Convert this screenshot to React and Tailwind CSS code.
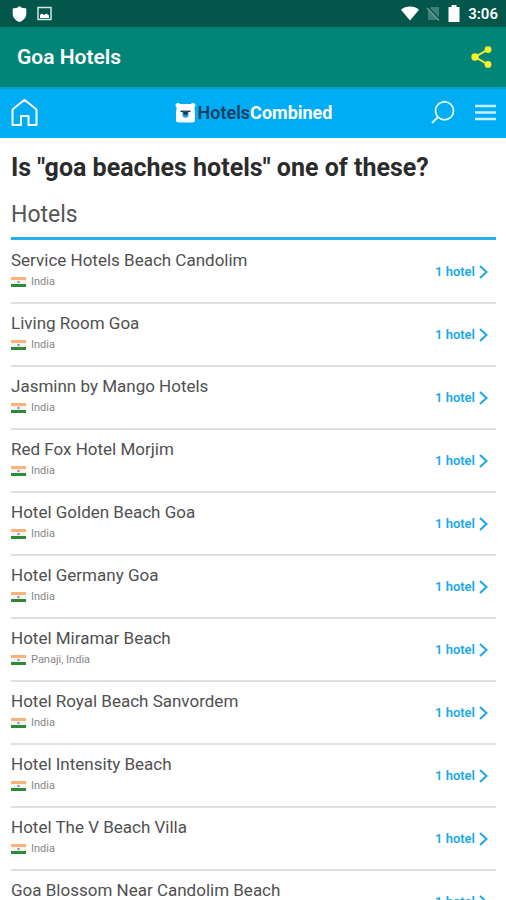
/**
 * Hotel search results screen.
 */

const HOTELS = [
  { name: 'Service Hotels Beach Candolim', place: 'India' },
  { name: 'Living Room Goa', place: 'India' },
  { name: 'Jasminn by Mango Hotels', place: 'India' },
  { name: 'Red Fox Hotel Morjim', place: 'India' },
  { name: 'Hotel Golden Beach Goa', place: 'India' },
  { name: 'Hotel Germany Goa', place: 'India' },
  { name: 'Hotel Miramar Beach', place: 'Panaji, India' },
  { name: 'Hotel Royal Beach Sanvordem', place: 'India' },
  { name: 'Hotel Intensity Beach', place: 'India' },
  { name: 'Hotel The V Beach Villa', place: 'India' },
  { name: 'Goa Blossom Near Candolim Beach', place: 'India' },
];

/**
 * Android status bar with notification icons and clock.
 */
function StatusBar() {
  return (
    <div className="flex h-[27px] shrink-0 items-center justify-between bg-[#02564a] pr-2 pl-3 text-white">
      <div className="flex items-center gap-[10px]">
        <svg width="15" height="16" viewBox="0 0 15 16" fill="currentColor">
          <path d="M7.500 0 9.800 1.700 14.300 2.600V8c0 3.800-2.900 6.500-6.800 8C3.600 14.500.7 11.800.7 8V2.600L5.200 1.700Z" />
        </svg>
        <svg width="15" height="15" viewBox="0 0 15 15" fill="none">
          <rect x="1" y="1.500" width="13" height="12" stroke="#d6e6e3" strokeWidth="1.500" />
          <path d="M3 12V9l2-1.500 2 1.500 2.500-1.500L12 9.500V12Z" fill="currentColor" />
        </svg>
      </div>
      <div className="flex items-center gap-2">
        <svg width="18" height="15" viewBox="0 0 19 15" fill="currentColor">
          <path d="M9.500 15 0 3.500C2.600 1.300 5.800.2 9.500.2s6.900 1.100 9.500 3.300Z" />
        </svg>
        <svg width="13" height="15" viewBox="0 0 13 15" fill="none">
          <path d="M4 1h8v13H1V4.500Z" fill="#3c7f76" />
          <path d="M.5 .5 13 13.500" stroke="#02564a" strokeWidth="1.500" />
          <path d="M0 2 12 14.500" stroke="#6a9d96" strokeWidth="1.300" />
        </svg>
        <svg width="12" height="17" viewBox="0 0 12 17" fill="currentColor">
          <path d="M3.500 0h5v2H11.500v15H.5V2h3Z" />
        </svg>
        <span className="text-[15px] leading-5 font-semibold">3:06</span>
      </div>
    </div>
  );
}

/**
 * App title bar with the share action.
 */
function TitleBar() {
  return (
    <header className="flex h-[60px] shrink-0 items-center justify-between bg-[#028577] pr-[14px] pl-[17px]">
      <h1 className="text-[21px] leading-7 font-semibold text-white">Goa Hotels</h1>
      <button type="button" aria-label="Share">
        <svg width="21" height="22" viewBox="0 0 21 22" fill="#fbf12b" stroke="#fbf12b">
          <path d="M17 3.500 4 11l13 7.500" fill="none" strokeWidth="2" />
          <circle cx="17" cy="3.600" r="3.400" stroke="none" />
          <circle cx="4" cy="11" r="3.700" stroke="none" />
          <circle cx="17" cy="18.400" r="3.400" stroke="none" />
        </svg>
      </button>
    </header>
  );
}

/**
 * Bear head mark and the two-tone brand name.
 */
function Logo() {
  return (
    <a href="#" className="flex items-center gap-[2px]">
      <svg width="21" height="21" viewBox="0 0 21 21">
        <path
          d="M3 0c1 0 1.700.4 2.200 1.100h10.600C16.300.4 17 0 18 0c1.500 0 2.500 1 2.500 2.300 0 1-.5 1.700-1.200 2.100l.7 5.100v7.500c0 1.500-1 2.500-2.500 2.500h-14C2 19.500 1 18.500 1 17V9.500l.7-5.100C1 4 .5 3.300.5 2.300.5 1 1.500 0 3 0Z"
          fill="#fff"
        />
        <path d="M5.500 8.300h10" stroke="#1c3654" strokeWidth="1.400" />
        <path d="M7.500 9Q10.500 7.500 13.500 9V11.500q0 3.300-3 3.300t-3-3.300Z" fill="#13a0e2" />
        <path d="M8 8.500h5L12.200 11.800H8.800Z" fill="#1c3654" />
      </svg>
      <span className="text-[18px] leading-6 font-bold text-white">
        <span className="font-semibold text-[#1c3f68]">Hotels</span>Combined
      </span>
    </a>
  );
}

/**
 * Site navigation bar.
 */
function NavBar() {
  return (
    <nav className="grid h-[51px] shrink-0 grid-cols-[1fr_auto_1fr] items-center border-t-2 border-[#059fca] bg-[#00adf2] pr-[10px] pb-px pl-[11px] text-white">
      <a href="#" aria-label="Home">
        <svg width="28" height="29" viewBox="0 0 28 29" fill="none" stroke="currentColor" strokeWidth="2" strokeLinejoin="round">
          <path d="M1.500 10.500 13.500 .8 25.500 10.500v15.500h-8V17h-7.500v9H1.500Z" />
        </svg>
      </a>
      <Logo />
      <div className="flex items-center justify-end gap-5">
        <button type="button" aria-label="Search">
          <svg width="24" height="24" viewBox="0 0 24 24" fill="none" stroke="#dff5ff" strokeWidth="1.800">
            <circle cx="13.500" cy="9.800" r="9" />
            <path d="M7 16 1 22" strokeWidth="2" />
          </svg>
        </button>
        <button type="button" aria-label="Menu">
          <svg width="21" height="18" viewBox="0 0 21 18" fill="none" stroke="#c9eefe" strokeWidth="2.400">
            <path d="M0 2h21M0 8.500h21M0 15h21" />
          </svg>
        </button>
      </div>
    </nav>
  );
}

function Flag() {
  return (
    <svg width="15" height="10" viewBox="0 0 15 10">
      <rect width="15" height="10" fill="#f4f5f2" />
      <rect width="15" height="3" fill="#f9b27a" />
      <rect y="7" width="15" height="3" fill="#2f8a37" />
      <circle cx="7.500" cy="5" r="1.200" fill="#8b8fae" />
    </svg>
  );
}

/**
 * One result row.
 *
 * @param {Object} props - Component props.
 * @param {string} props.name - Hotel name.
 * @param {string} props.place - Location under the name.
 */
function HotelRow({ name, place }) {
  return (
    <li className="border-b-2 border-[#dedfe0]">
      <a href="#" className="flex items-center justify-between pr-2">
        <div className="pt-[7px] pb-3">
          <p className="text-[17px] leading-6 text-[#505050]">{name}</p>
          <div className="flex items-center gap-[5px] pt-[2px]">
            <Flag />
            <span className="text-[11px] leading-4 text-[#858585]">{place}</span>
          </div>
        </div>
        <div className="flex items-center gap-1 text-[#1aa9e8]">
          <span className="text-[13px] leading-4 font-semibold">1 hotel</span>
          <svg width="9" height="14" viewBox="0 0 9 14" fill="none" stroke="currentColor" strokeWidth="2">
            <path d="M1 1 7.500 7 1 13" />
          </svg>
        </div>
      </a>
    </li>
  );
}

export default function App() {
  return (
    <div className="flex h-screen flex-col overflow-hidden bg-white font-['Roboto',sans-serif]">
      <StatusBar />
      <TitleBar />
      <NavBar />
      <main className="min-h-0 flex-1 overflow-hidden pt-3 pr-[10px] pl-[11px]">
        <h2 className="text-[25px] leading-9 font-bold text-[#2b2b2b]">
          Is "goa beaches hotels" one of these?
        </h2>
        <h3 className="border-b-3 border-[#22b1e8] pt-[13px] pb-[6px] text-[23px] leading-8 text-[#555]">
          Hotels
        </h3>
        <ul className="pt-px">
          {HOTELS.map((hotel) => (
            <HotelRow key={hotel.name} {...hotel} />
          ))}
        </ul>
      </main>
    </div>
  );
}
